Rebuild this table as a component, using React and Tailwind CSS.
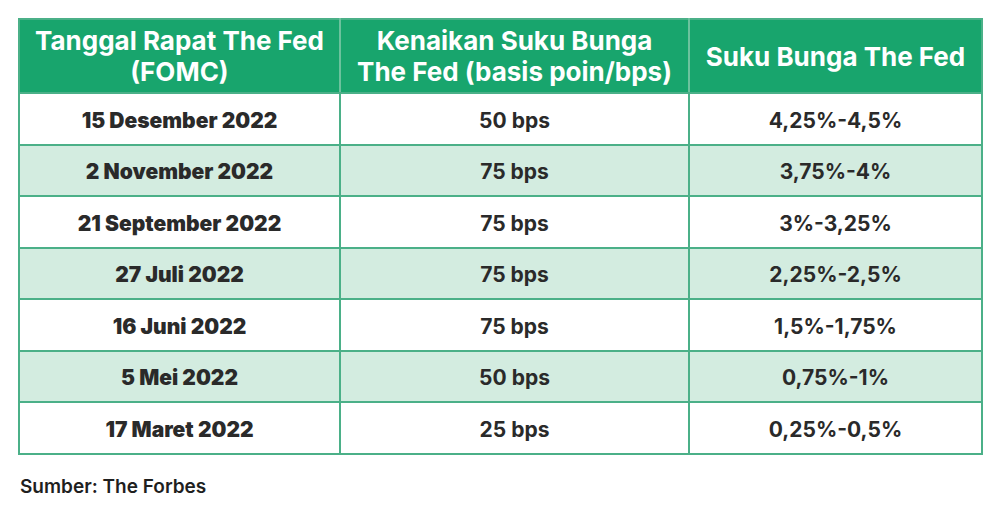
const rows = [
  ['15 Desember 2022', '50 bps', '4,25%-4,5%'],
  ['2 November 2022', '75 bps', '3,75%-4%'],
  ['21 September 2022', '75 bps', '3%-3,25%'],
  ['27 Juli 2022', '75 bps', '2,25%-2,5%'],
  ['16 Juni 2022', '75 bps', '1,5%-1,75%'],
  ['5 Mei 2022', '50 bps', '0,75%-1%'],
  ['17 Maret 2022', '25 bps', '0,25%-0,5%'],
]

export default function App() {
  return (
    <div className="w-[1000px] h-[513px] bg-white pt-[18px] pl-[18px]" style={{ fontFamily: 'Inter, "Open Sans", sans-serif' }}>
      <table className="w-[963px] border-collapse table-fixed">
        <colgroup>
          <col className="w-[321px]" />
          <col className="w-[349px]" />
          <col className="w-[293px]" />
        </colgroup>
        <thead>
          <tr className="bg-[#18a56d] text-white h-[74px]">
            <th className="border-2 border-[#4bb088] border-r-[#6cc29d] text-[26px] leading-[31px] font-bold px-1">
              Tanggal Rapat The Fed<br />(FOMC)
            </th>
            <th className="border-2 border-[#4bb088] border-r-[#6cc29d] text-[26px] leading-[31px] font-bold px-1">
              Kenaikan Suku Bunga<br />The Fed (basis poin/bps)
            </th>
            <th className="border-2 border-[#4bb088] text-[26px] leading-[31px] font-bold px-1">
              Suku Bunga The Fed
            </th>
          </tr>
        </thead>
        <tbody>
          {rows.map((r, i) => (
            <tr key={i} className={`${i % 2 === 1 ? 'bg-[#d3ece0]' : 'bg-white'} h-[51.5px] text-[#2a2a2a]`}>
              <td className="border-2 border-[#4bb088] pt-[3px] text-center text-[21px] font-black">{r[0]}</td>
              <td className="border-2 border-[#4bb088] pt-[3px] text-center text-[21px] font-bold">{r[1]}</td>
              <td className="border-2 border-[#4bb088] pt-[3px] text-center text-[21px] font-bold">{r[2]}</td>
            </tr>
          ))}
        </tbody>
      </table>
      <p className="mt-[18px] ml-[2px] text-[19px] font-semibold text-[#1f1f1f]">Sumber: The Forbes</p>
    </div>
  )
}
